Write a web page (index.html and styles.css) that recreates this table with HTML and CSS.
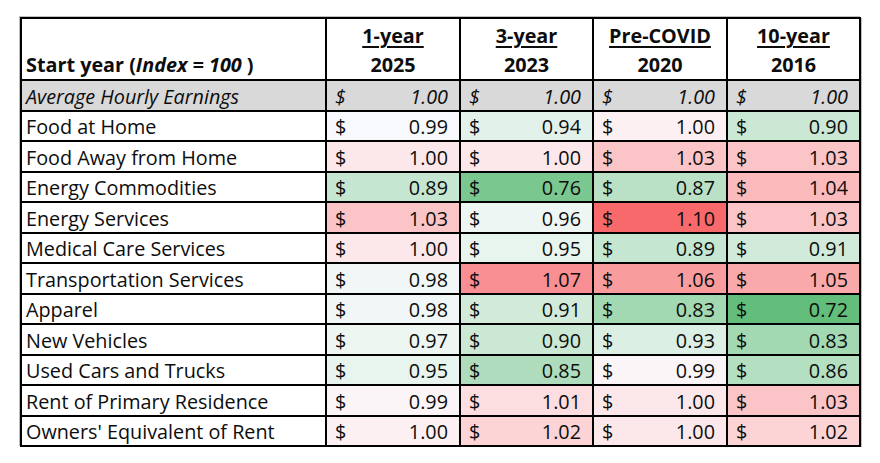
FILE: index.html
```html
<!DOCTYPE html>
<html lang="en">
<head>
<meta charset="utf-8">
<title>Start year index table</title>
<link rel="stylesheet" href="styles.css">
</head>
<body>
<table class="grid">
  <colgroup>
    <col class="c-label">
    <col class="c-a">
    <col class="c-b">
    <col class="c-a">
    <col class="c-b">
  </colgroup>
  <thead>
    <tr class="head">
      <th class="label">Start year (<i>Index = 100</i> )</th>
      <th><span class="u">1-year</span><br>2025</th>
      <th><span class="u">3-year</span><br>2023</th>
      <th><span class="u">Pre-COVID</span><br>2020</th>
      <th><span class="u">10-year</span><br>2016</th>
    </tr>
  </thead>
  <tbody>
    <tr class="base">
      <td class="label">Average Hourly Earnings</td>
      <td><div class="acc"><span>$</span><span>1.00</span></div></td>
      <td><div class="acc"><span>$</span><span>1.00</span></div></td>
      <td><div class="acc"><span>$</span><span>1.00</span></div></td>
      <td><div class="acc"><span>$</span><span>1.00</span></div></td>
    </tr>
    <tr>
      <td class="label">Food at Home</td>
      <td class="n099a"><div class="acc"><span>$</span><span>0.99</span></div></td>
      <td class="n094"><div class="acc"><span>$</span><span>0.94</span></div></td>
      <td class="n100a"><div class="acc"><span>$</span><span>1.00</span></div></td>
      <td class="n090"><div class="acc"><span>$</span><span>0.90</span></div></td>
    </tr>
    <tr>
      <td class="label">Food Away from Home</td>
      <td class="n100"><div class="acc"><span>$</span><span>1.00</span></div></td>
      <td class="n100"><div class="acc"><span>$</span><span>1.00</span></div></td>
      <td class="n103"><div class="acc"><span>$</span><span>1.03</span></div></td>
      <td class="n103"><div class="acc"><span>$</span><span>1.03</span></div></td>
    </tr>
    <tr>
      <td class="label">Energy Commodities</td>
      <td class="n089"><div class="acc"><span>$</span><span>0.89</span></div></td>
      <td class="n076"><div class="acc"><span>$</span><span>0.76</span></div></td>
      <td class="n087"><div class="acc"><span>$</span><span>0.87</span></div></td>
      <td class="n104"><div class="acc"><span>$</span><span>1.04</span></div></td>
    </tr>
    <tr>
      <td class="label">Energy Services</td>
      <td class="n103"><div class="acc"><span>$</span><span>1.03</span></div></td>
      <td class="n096"><div class="acc"><span>$</span><span>0.96</span></div></td>
      <td class="n110"><div class="acc"><span>$</span><span>1.10</span></div></td>
      <td class="n103"><div class="acc"><span>$</span><span>1.03</span></div></td>
    </tr>
    <tr>
      <td class="label">Medical Care Services</td>
      <td class="n100"><div class="acc"><span>$</span><span>1.00</span></div></td>
      <td class="n095"><div class="acc"><span>$</span><span>0.95</span></div></td>
      <td class="n089"><div class="acc"><span>$</span><span>0.89</span></div></td>
      <td class="n091"><div class="acc"><span>$</span><span>0.91</span></div></td>
    </tr>
    <tr>
      <td class="label">Transportation Services</td>
      <td class="n098"><div class="acc"><span>$</span><span>0.98</span></div></td>
      <td class="n107"><div class="acc"><span>$</span><span>1.07</span></div></td>
      <td class="n106"><div class="acc"><span>$</span><span>1.06</span></div></td>
      <td class="n105"><div class="acc"><span>$</span><span>1.05</span></div></td>
    </tr>
    <tr>
      <td class="label">Apparel</td>
      <td class="n098"><div class="acc"><span>$</span><span>0.98</span></div></td>
      <td class="n091"><div class="acc"><span>$</span><span>0.91</span></div></td>
      <td class="n083"><div class="acc"><span>$</span><span>0.83</span></div></td>
      <td class="n072"><div class="acc"><span>$</span><span>0.72</span></div></td>
    </tr>
    <tr>
      <td class="label">New Vehicles</td>
      <td class="n097"><div class="acc"><span>$</span><span>0.97</span></div></td>
      <td class="n090"><div class="acc"><span>$</span><span>0.90</span></div></td>
      <td class="n093"><div class="acc"><span>$</span><span>0.93</span></div></td>
      <td class="n083"><div class="acc"><span>$</span><span>0.83</span></div></td>
    </tr>
    <tr>
      <td class="label">Used Cars and Trucks</td>
      <td class="n095"><div class="acc"><span>$</span><span>0.95</span></div></td>
      <td class="n085"><div class="acc"><span>$</span><span>0.85</span></div></td>
      <td class="n099"><div class="acc"><span>$</span><span>0.99</span></div></td>
      <td class="n086"><div class="acc"><span>$</span><span>0.86</span></div></td>
    </tr>
    <tr>
      <td class="label">Rent of Primary Residence</td>
      <td class="n099"><div class="acc"><span>$</span><span>0.99</span></div></td>
      <td class="n101"><div class="acc"><span>$</span><span>1.01</span></div></td>
      <td class="n100"><div class="acc"><span>$</span><span>1.00</span></div></td>
      <td class="n103"><div class="acc"><span>$</span><span>1.03</span></div></td>
    </tr>
    <tr>
      <td class="label">Owners' Equivalent of Rent</td>
      <td class="n100a"><div class="acc"><span>$</span><span>1.00</span></div></td>
      <td class="n102"><div class="acc"><span>$</span><span>1.02</span></div></td>
      <td class="n100"><div class="acc"><span>$</span><span>1.00</span></div></td>
      <td class="n102"><div class="acc"><span>$</span><span>1.02</span></div></td>
    </tr>
  </tbody>
</table>
</body>
</html>
```

FILE: styles.css
```css
html, body {
  margin: 0;
  padding: 0;
  background: #ffffff;
}

body {
  font-family: "Open Sans", "Lato", "Liberation Sans", sans-serif;
  color: #0d0d0d;
  font-size: 19.8px;
}

.grid {
  margin: 17px 0 0 20px;
  border-collapse: collapse;
  table-layout: fixed;
  width: 839px;
  box-shadow: -1px -1px 0 #bfbfbf, 1px 1px 0 #bfbfbf;
}

.c-label { width: 305px; }
.c-a { width: 134px; }
.c-b { width: 133px; }

.grid th,
.grid td {
  border: 2px solid #000;
  padding: 0;
  vertical-align: bottom;
  white-space: nowrap;
  overflow: hidden;
}

.head {
  height: 62px;
}

.head th {
  font-weight: bold;
  text-align: center;
  line-height: 29px;
  padding-bottom: 0;
}

.head th.label {
  text-align: left;
  padding-left: 4px;
}

.u {
  text-decoration: underline;
  text-decoration-thickness: 2px;
  text-underline-offset: 3px;
}

tbody tr {
  height: 30.5px;
}

tbody td {
  line-height: 27px;
  padding-bottom: 1.5px;
}

td.label {
  padding-left: 4px;
}

.acc {
  display: flex;
  justify-content: space-between;
  padding: 0 11px 0 8px;
}

.base td {
  background: #d9d9d9;
  font-style: italic;
}

/* 3-colour scale: green (low) -> white -> red (high) */
.n072 { background: #63be7b; }
.n076 { background: #7ac78f; }
.n083 { background: #a2d8b2; }
.n085 { background: #aedcbc; }
.n086 { background: #b4dfc1; }
.n087 { background: #bae1c6; }
.n089 { background: #c5e6d0; }
.n090 { background: #cbe8d5; }
.n091 { background: #d1eada; }
.n093 { background: #dcefe4; }
.n094 { background: #e2f1e9; }
.n095 { background: #e8f4ee; }
.n096 { background: #eef6f3; }
.n097 { background: #edf6f1; }
.n098 { background: #f1f7f6; }
.n099a { background: #f8f9fd; }
.n099 { background: #fcf5f8; }
.n100a { background: #fcf0f3; }
.n100 { background: #fce8eb; }
.n101 { background: #fcdee0; }
.n102 { background: #fcd4d6; }
.n103 { background: #fbc4c6; }
.n104 { background: #fbbbbd; }
.n105 { background: #faa9ab; }
.n106 { background: #f99c9e; }
.n107 { background: #f98f92; }
.n110 { background: #f8696b; }
```
